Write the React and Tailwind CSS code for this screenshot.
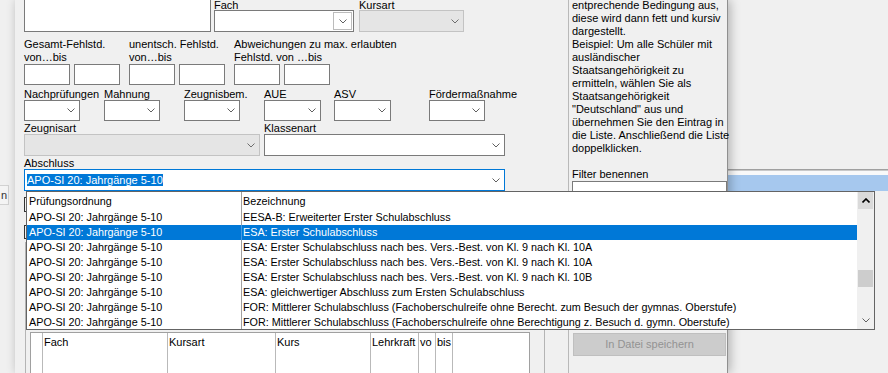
import React from "react";

const Chevron = ({ color = "#606060", up = false, sw = 1 }) => (
  <svg width="8" height="5" viewBox="0 0 8 5" className="block shrink-0">
    <polyline
      points={up ? "0.5,4.5 4,1 7.5,4.5" : "0.5,0.5 4,4 7.5,0.5"}
      fill="none"
      stroke={color}
      strokeWidth={sw}
    />
  </svg>
);

function Combo({ className = "", disabled = false, focused = false, children }) {
  const base = disabled
    ? "bg-[#e5e5e5] border-[#c3c3c3]"
    : focused
    ? "bg-white border-[#0078d7]"
    : "bg-white border-[#7a7a7a]";
  return (
    <div className={`flex items-center border ${base} ${className}`}>
      <div className="flex-1 min-w-0 overflow-hidden whitespace-nowrap pl-[2px]">{children}</div>
      <div className="pr-[4px]">
        <Chevron color={disabled ? "#6d6d6d" : "#606060"} />
      </div>
    </div>
  );
}

const Input = () => <div className="w-[46px] h-[21px] bg-white border border-[#7a7a7a]" />;

function FehlGroup({ className, l1, l2 }) {
  return (
    <div className={`flex flex-col ${className}`}>
      <div className="h-[13px] leading-[13px] whitespace-nowrap">{l1}</div>
      <div className="h-[13px] leading-[13px] whitespace-nowrap">{l2}</div>
      <div className="flex gap-[4px]">
        <Input />
        <Input />
      </div>
    </div>
  );
}

function SmallCombo({ className, label, w }) {
  return (
    <div className={`flex flex-col ${className}`}>
      <div className="h-[12px] leading-[12px] whitespace-nowrap">{label}</div>
      <Combo className={`${w} h-[21px]`} />
    </div>
  );
}

const helpLines = [
  "entprechende Bedingung aus,",
  "diese wird dann fett und kursiv",
  "dargestellt.",
  "Beispiel: Um alle Schüler mit",
  "ausländischer",
  "Staatsangehörigkeit zu",
  "ermitteln, wählen Sie als",
  "Staatsangehörigkeit",
  "\"Deutschland\" aus und",
  "übernehmen Sie den Eintrag in",
  "die Liste. Anschließend die Liste",
  "doppelklicken.",
  "\u00a0",
  "Filter benennen",
];

const rows = [
  "EESA-B: Erweiterter Erster Schulabschluss",
  "ESA: Erster Schulabschluss",
  "ESA: Erster Schulabschluss nach bes. Vers.-Best. von Kl. 9 nach Kl. 10A",
  "ESA: Erster Schulabschluss nach bes. Vers.-Best. von Kl. 9 nach Kl. 10A",
  "ESA: Erster Schulabschluss nach bes. Vers.-Best. von Kl. 9 nach Kl. 10B",
  "ESA: gleichwertiger Abschluss zum Ersten Schulabschluss",
  "FOR: Mittlerer Schulabschluss (Fachoberschulreife ohne Berecht. zum Besuch der gymnas. Oberstufe)",
  "FOR: Mittlerer Schulabschluss (Fachoberschulreife ohne Berechtigung z. Besuch d. gymn. Oberstufe)",
];

const gridCols = [
  { w: "w-[12px]", t: "" },
  { w: "w-[125px]", t: "Fach" },
  { w: "w-[108px]", t: "Kursart" },
  { w: "w-[95px]", t: "Kurs" },
  { w: "w-[48px]", t: "Lehrkraft" },
  { w: "w-[17px]", t: "vo" },
  { w: "w-[17px]", t: "bis" },
];

export default function App() {
  return (
    <div className="relative w-[888px] h-[373px] overflow-hidden bg-[#f0f0f0] text-[11px] leading-[13px] text-black font-['Liberation_Sans',Arial,sans-serif]">
      {/* background window: left fragment */}
      <div className="absolute left-[-30px] top-[185px] w-[39px] h-[20px] border border-[#d2d2d2] bg-[#f4f4f4] flex items-center justify-end pr-[1px] text-[#333]">
        n
      </div>

      {/* background window: right side */}
      <div className="absolute left-[727px] right-0 top-[169px] flex flex-col">
        <div className="h-[1px] bg-[#a0a0a0]" />
        <div className="h-[1px] bg-[#c9c9c9]" />
        <div className="h-[4px] bg-[#f9f9f9]" />
        <div className="h-[16px] bg-[#a6c8ee]" />
      </div>

      {/* dialog */}
      <div className="absolute left-[15px] top-0 h-[373px] flex bg-[#f0f0f0] shadow-[2px_0_10px_rgba(0,0,0,0.28)]">
        {/* main area */}
        <div className="w-[553px] shrink-0 pl-[9px] flex flex-col">
          {/* row 1 */}
          <div className="flex items-end -mt-[14px]">
            <div className="w-[187px] h-[46px] bg-white border border-[#7a7a7a]" />
            <div className="ml-[3px] flex flex-col">
              <div className="h-[10px] leading-[10px]">Fach</div>
              <div className="w-[140px] h-[22px] bg-white border border-[#7a7a7a] flex justify-end items-center">
                <div className="w-[19px] h-[18px] mr-[1px] border border-[#bcbcbc] bg-white flex items-center justify-center">
                  <Chevron />
                </div>
              </div>
            </div>
            <div className="ml-[5px] flex flex-col">
              <div className="h-[10px] leading-[10px]">Kursart</div>
              <Combo disabled className="w-[105px] h-[22px]" />
            </div>
          </div>

          {/* row 2 */}
          <div className="flex mt-[6px]">
            <FehlGroup className="w-[105px]" l1="Gesamt-Fehlstd." l2="von…bis" />
            <FehlGroup className="w-[105px]" l1="unentsch. Fehlstd." l2="von…bis" />
            <FehlGroup className="" l1="Abweichungen zu max. erlaubten" l2="Fehlstd. von …bis" />
          </div>

          {/* row 3 */}
          <div className="flex mt-[3px]">
            <SmallCombo className="w-[80px]" label="Nachprüfungen" w="w-[56px]" />
            <SmallCombo className="w-[80px]" label="Mahnung" w="w-[56px]" />
            <SmallCombo className="w-[80px]" label="Zeugnisbem." w="w-[56px]" />
            <SmallCombo className="w-[70px]" label="AUE" w="w-[57px]" />
            <SmallCombo className="w-[95px]" label="ASV" w="w-[57px]" />
            <SmallCombo className="" label="Fördermaßnahme" w="w-[56px]" />
          </div>

          {/* row 4 */}
          <div className="flex mt-[1px] gap-[4px]">
            <div className="flex flex-col">
              <div className="h-[12px] leading-[12px]">Zeugnisart</div>
              <Combo disabled className="w-[236px] h-[22px]" />
            </div>
            <div className="flex flex-col">
              <div className="h-[12px] leading-[12px]">Klassenart</div>
              <Combo className="w-[241px] h-[22px]" />
            </div>
          </div>

          {/* row 5 */}
          <div className="flex flex-col mt-[1px]">
            <div className="h-[12px] leading-[12px]">Abschluss</div>
            <Combo focused className="w-[481px] h-[22px]">
              <span className="bg-[#0078d7] text-white">APO-SI 20: Jahrgänge 5-10</span>
            </Combo>
          </div>

          {/* hidden checkboxes */}
          <div className="mt-[6px] w-[13px] h-[15px] border border-[#333]" />
          <div className="mt-[13px] w-[13px] h-[14px] border border-[#333]" />

          {/* group box with grid */}
          <div className="mt-[3px] ml-[1px] w-[520px] flex-1 border-l border-r border-t border-[#b4b4b4] pt-[89px] pl-[4px] flex flex-col">
            <div className="w-[500px] flex-1 bg-white border-l border-t border-r border-[#a0a0a0] flex">
              {gridCols.map((c, i) => (
                <div key={i} className={`${c.w} shrink-0 border-r border-[#b9b9b9] pt-[3px] pl-[1px] whitespace-nowrap`}>
                  {c.t}
                </div>
              ))}
              <div className="flex-1" />
            </div>
          </div>
        </div>

        {/* right help panel */}
        <div className="w-[160px] shrink-0 border-l border-l-[#b9b9b9] border-r border-r-[#8f8f8f] pl-[3px] flex flex-col">
          <div className="-mt-[1px] leading-[13px] whitespace-nowrap">
            {helpLines.map((l, i) => (
              <div key={i} className="h-[13px]">{l}</div>
            ))}
          </div>
          <div className="w-[155px] h-[21px] bg-white border border-[#7a7a7a]" />
          <div className="mt-[131px] ml-[1px] w-[153px] h-[23px] bg-[#cccccc] border border-[#bfbfbf] text-[#939393] flex items-center justify-center">
            In Datei speichern
          </div>
        </div>
      </div>

      {/* dropdown list overlay */}
      <div className="absolute left-[26px] top-[191px] w-[849px] h-[139px] bg-white border border-[#646464] flex overflow-hidden text-[10.8px]">
        <div className="w-[830px] shrink-0 flex flex-col">
          <div className="h-[18px] flex leading-[18px] shrink-0">
            <div className="w-[215px] shrink-0 border-r border-[#a0a0a0] pl-[2px]">Prüfungsordnung</div>
            <div className="pl-[1px]">Bezeichnung</div>
          </div>
          {rows.map((r, i) => {
            const sel = i === 1;
            return (
              <div
                key={i}
                className={`h-[15px] shrink-0 flex leading-[15px] whitespace-nowrap ${sel ? "bg-[#0078d7] text-white" : ""}`}
              >
                <div className={`w-[215px] shrink-0 border-r pl-[2px] ${sel ? "border-[#4a9ae0]" : "border-[#a0a0a0]"}`}>
                  APO-SI 20: Jahrgänge 5-10
                </div>
                <div className="pl-[1px]">{r}</div>
              </div>
            );
          })}
        </div>
        {/* scrollbar */}
        <div className="w-[17px] shrink-0 bg-[#f0f0f0] flex flex-col px-[1px]">
          <div className="h-[17px] bg-[#dadada] flex items-center justify-center">
            <Chevron up color="#000" sw={1.6} />
          </div>
          <div className="flex-1">
            <div className="mt-[61px] h-[17px] bg-[#cdcdcd]" />
          </div>
          <div className="h-[17px] flex items-center justify-center">
            <Chevron color="#606060" />
          </div>
        </div>
      </div>
    </div>
  );
}
